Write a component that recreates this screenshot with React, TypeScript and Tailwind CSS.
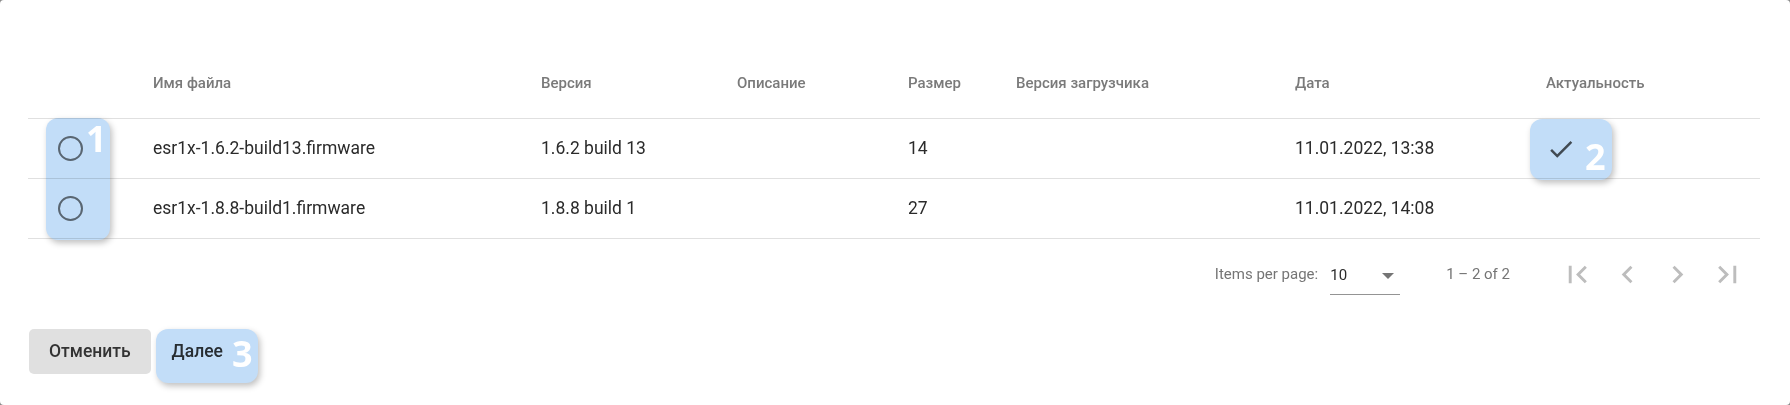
interface FirmwareRow {
  name: string
  version: string
  description: string
  size: string
  loader: string
  date: string
  actual: boolean
}

const rows: FirmwareRow[] = [
  { name: 'esr1x-1.6.2-build13.firmware', version: '1.6.2 build 13', description: '', size: '14', loader: '', date: '11.01.2022, 13:38', actual: true },
  { name: 'esr1x-1.8.8-build1.firmware', version: '1.8.8 build 1', description: '', size: '27', loader: '', date: '11.01.2022, 14:08', actual: false },
]

const cols = 'grid grid-cols-[125px_388px_196px_171px_108px_279px_251px_214px]'

function PagerIcon({ d }: { d: string }) {
  return (
    <button className="w-[50px] h-[50px] flex items-center justify-center" disabled>
      <svg width="35" height="35" viewBox="0 0 24 24" fill="#bdbdbd">
        <path d={d} />
      </svg>
    </button>
  )
}

function Marker({ n, className }: { n: string; className: string }) {
  return (
    <span
      className={`absolute text-[36px] leading-none font-bold text-white font-['Open_Sans',sans-serif] ${className}`}
    >
      {n}
    </span>
  )
}

export default function App() {
  return (
    <div className="w-[1790px] h-[405px] bg-[#8a8a8a]">
      <div className="relative h-full rounded-[4px] bg-white pl-[28px] pr-[30px] pt-[49px] font-['Roboto',sans-serif]">
        {/* Header */}
        <div className={`${cols} h-[70px] items-center border-b border-[#e0e0e0] text-[15px] font-medium text-[#7a7a7a]`}>
          <div />
          <div>Имя файла</div>
          <div>Версия</div>
          <div>Описание</div>
          <div>Размер</div>
          <div>Версия загрузчика</div>
          <div>Дата</div>
          <div>Актуальность</div>
        </div>

        {/* Rows */}
        {rows.map((r) => (
          <div key={r.name} className={`${cols} h-[60px] items-center border-b border-[#e0e0e0] text-[17.5px] text-[#2b2b2b]`}>
            <div className="pl-[30px]">
              <div className="w-[25px] h-[25px] rounded-full border-[2.5px] border-[#757575]" />
            </div>
            <div>{r.name}</div>
            <div>{r.version}</div>
            <div>{r.description}</div>
            <div>{r.size}</div>
            <div>{r.loader}</div>
            <div>{r.date}</div>
            <div>
              {r.actual && (
                <svg width="30" height="30" viewBox="0 0 24 24" fill="#555555">
                  <path d="M9 16.2L4.8 12l-1.4 1.4L9 19 21 7l-1.4-1.4L9 16.2z" />
                </svg>
              )}
            </div>
          </div>
        ))}

        {/* Paginator */}
        <div className="flex h-[70px] items-center justify-end pr-[8px] text-[15px] text-[#757575]">
          <span>Items per page:</span>
          <div className="ml-[12px] w-[70px] h-[38px] mt-[4px] flex items-center justify-between border-b border-[#949494] text-[#2b2b2b]">
            <span>10</span>
            <span className="mr-[6px] w-0 h-0 border-l-[6px] border-r-[6px] border-t-[6px] border-l-transparent border-r-transparent border-t-[#757575]" />
          </div>
          <span className="ml-[46px] mr-[42px]">1 – 2 of 2</span>
          <PagerIcon d="M18.41 16.59L13.82 12l4.59-4.59L17 6l-6 6 6 6zM6 6h2v12H6z" />
          <PagerIcon d="M15.41 7.41L14 6l-6 6 6 6 1.41-1.41L10.83 12z" />
          <PagerIcon d="M10 6L8.59 7.41 13.17 12l-4.58 4.59L10 18l6-6z" />
          <PagerIcon d="M5.59 7.41L10.18 12l-4.59 4.59L7 18l6-6-6-6zM16 6h2v12h-2z" />
        </div>

        {/* Actions */}
        <div className="mt-[20px] flex items-center pl-[1px]">
          <button className="h-[45px] px-[20px] rounded-[5px] bg-[#e0e0e0] text-[17.5px] font-medium text-[#333333]">
            Отменить
          </button>
          <button className="ml-[11px] h-[45px] px-[10px] rounded-[5px] text-[17.5px] font-medium text-[#333333]">
            Далее
          </button>
        </div>

        {/* Annotation highlights */}
        <div className="absolute left-[46px] top-[118px] w-[64px] h-[122px] rounded-[12px] bg-[#c2ddf8] mix-blend-multiply shadow-[2px_3px_6px_rgba(0,0,0,0.25)]" />
        <Marker n="1" className="left-[86px] top-[121px]" />

        <div className="absolute left-[1530px] top-[119px] w-[82px] h-[61px] rounded-[12px] bg-[#c2ddf8] mix-blend-multiply shadow-[2px_3px_6px_rgba(0,0,0,0.25)]" />
        <Marker n="2" className="left-[1585px] top-[139px]" />

        <div className="absolute left-[156px] top-[329px] w-[102px] h-[54px] rounded-[12px] bg-[#c2ddf8] mix-blend-multiply shadow-[2px_3px_6px_rgba(0,0,0,0.25)]" />
        <Marker n="3" className="left-[232px] top-[336px]" />
      </div>
    </div>
  )
}
